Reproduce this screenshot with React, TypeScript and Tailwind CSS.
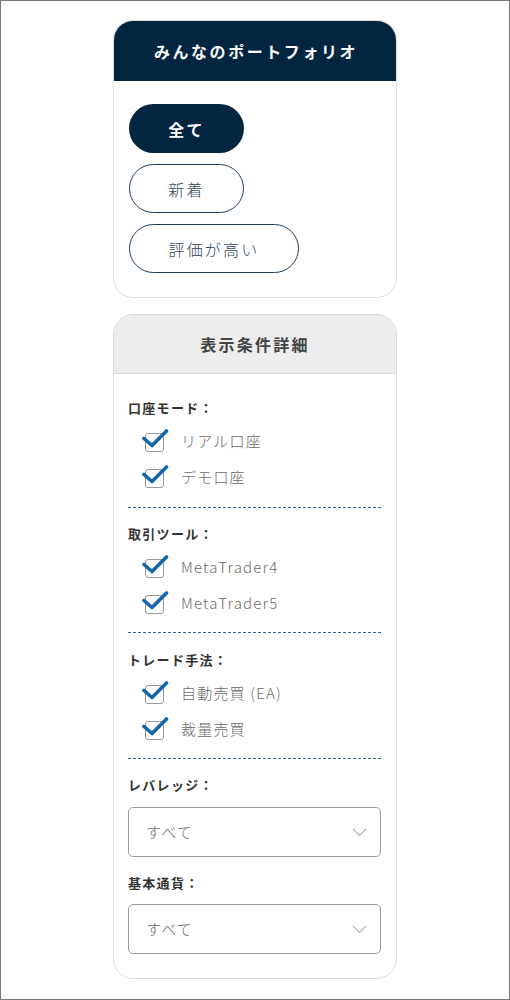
import React from "react";

function Check({ label }: { label: string }) {
  return (
    <div className="flex items-center h-[36px] pl-[17px]">
      <div className="relative w-[19px] h-[19px] mt-[3px]">
        <div className="absolute inset-0 border border-[#9a9a9a] rounded-[3px] bg-white" />
        <svg className="absolute left-[-3px] top-[-5px]" width="27" height="22" viewBox="0 0 27 22" fill="none">
          <path d="M2 10.5 L10 17.5 L24.5 3" stroke="#1666a8" strokeWidth="3.6" strokeLinecap="round" strokeLinejoin="round" />
        </svg>
      </div>
      <span className="ml-[17px] text-[15px] font-light text-[#6a6a6a] tracking-[0.08em] leading-[20px]">{label}</span>
    </div>
  );
}

function Label({ children }: { children: React.ReactNode }) {
  return <div className="text-[13px] font-bold text-[#333] leading-[20px] tracking-[0.1em]">{children}</div>;
}

function Dash() {
  return <div className="border-t border-dashed border-[#3d6080] h-0" />;
}

function Select() {
  return (
    <div className="h-[50px] border border-[#9a9a9a] rounded-[5px] flex items-center justify-between pl-[17px] pr-[13px]">
      <span className="text-[15px] font-light text-[#6a6a6a] tracking-[0.08em]">すべて</span>
      <svg width="15" height="9" viewBox="0 0 15 9" fill="none">
        <path d="M1 1 L7.5 7.5 L14 1" stroke="#b5b5b5" strokeWidth="1.2" />
      </svg>
    </div>
  );
}

export default function App() {
  return (
    <div
      className="w-[510px] h-[1000px] border border-[#777] bg-white box-border overflow-hidden"
      style={{ fontFamily: '"Noto Sans CJK JP", "Noto Sans", sans-serif' }}
    >
      <div className="w-[284px] mx-auto pt-[19px]">
        <div className="border border-[#dcdcdc] rounded-[20px] overflow-hidden">
          <div className="h-[60px] bg-[#032640] flex items-center justify-center text-white font-bold text-[16px] tracking-[0.16em] pl-[2px]">
            みんなのポートフォリオ
          </div>
          <div className="px-[15px] pt-[23px] pb-[24px] flex flex-col items-start gap-[11px]">
            <div className="w-[115px] h-[49px] rounded-full bg-[#032640] text-white font-bold text-[16px] flex items-center justify-center tracking-[0.14em]">
              全て
            </div>
            <div className="w-[115px] h-[49px] rounded-full border border-[#1f3d5c] text-[#34475a] font-light text-[16px] flex items-center justify-center tracking-[0.14em]">
              新着
            </div>
            <div className="w-[170px] h-[49px] rounded-full border border-[#1f3d5c] text-[#34475a] font-light text-[16px] flex items-center justify-center tracking-[0.14em]">
              評価が高い
            </div>
          </div>
        </div>

        <div className="mt-[16px] border border-[#dcdcdc] rounded-[20px] overflow-hidden">
          <div className="h-[59px] bg-[#ededed] border-b border-[#dcdcdc] flex items-center justify-center text-[#444] font-bold text-[16px] tracking-[0.14em]">
            表示条件詳細
          </div>
          <div className="pl-[14px] pr-[15px] pt-[24px] pb-[24px]">
            <Label>口座モード：</Label>
            <div className="mt-[5px] mb-[12px]">
              <Check label="リアル口座" />
              <Check label="デモ口座" />
            </div>
            <Dash />
            <div className="mt-[16px]">
              <Label>取引ツール：</Label>
            </div>
            <div className="mt-[5px] mb-[11px]">
              <Check label="MetaTrader4" />
              <Check label="MetaTrader5" />
            </div>
            <Dash />
            <div className="mt-[17px]">
              <Label>トレード手法：</Label>
            </div>
            <div className="mt-[5px] mb-[11px]">
              <Check label="自動売買 (EA)" />
              <Check label="裁量売買" />
            </div>
            <Dash />
            <div className="mt-[16px]">
              <Label>レバレッジ：</Label>
            </div>
            <div className="mt-[12px]">
              <Select />
            </div>
            <div className="mt-[16px]">
              <Label>基本通貨：</Label>
            </div>
            <div className="mt-[11px]">
              <Select />
            </div>
          </div>
        </div>
      </div>
    </div>
  );
}
